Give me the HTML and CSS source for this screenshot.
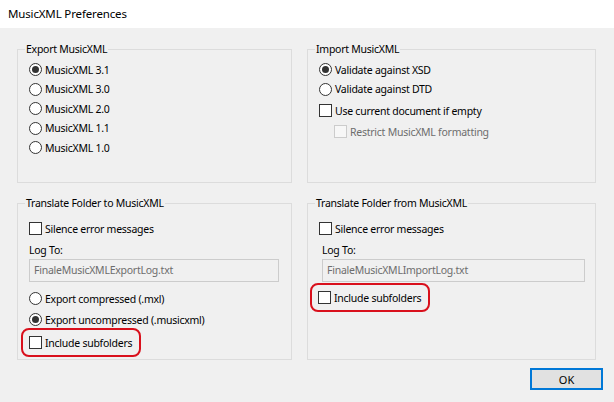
FILE: index.html
```html
<!DOCTYPE html>
<html lang="en">
<head>
    <meta charset="UTF-8">
    <meta name="viewport" content="width=device-width, initial-scale=1.0">
    <title>MusicXML Preferences</title>
    <link rel="stylesheet" href="styles.css">
</head>
<body>
    <div class="titlebar">MusicXML Preferences</div>
    <div class="dialog">
        <div class="groups">
            <fieldset class="group group-top">
                <legend>Export MusicXML</legend>
                <div class="group-body">
                    <label class="row radio-row"><span class="radio checked"></span>MusicXML 3.1</label>
                    <label class="row radio-row"><span class="radio"></span>MusicXML 3.0</label>
                    <label class="row radio-row"><span class="radio"></span>MusicXML 2.0</label>
                    <label class="row radio-row"><span class="radio"></span>MusicXML 1.1</label>
                    <label class="row radio-row"><span class="radio"></span>MusicXML 1.0</label>
                </div>
            </fieldset>
            <fieldset class="group group-top">
                <legend>Import MusicXML</legend>
                <div class="group-body">
                    <label class="row radio-row"><span class="radio checked"></span>Validate against XSD</label>
                    <label class="row radio-row"><span class="radio"></span>Validate against DTD</label>
                    <label class="row check-row first-check"><span class="check"></span>Use current document if empty</label>
                    <label class="row check-row sub disabled"><span class="check"></span>Restrict MusicXML formatting</label>
                </div>
            </fieldset>
            <fieldset class="group group-bottom">
                <legend>Translate Folder to MusicXML</legend>
                <div class="group-body folder-body">
                    <label class="row check-row"><span class="check"></span>Silence error messages</label>
                    <div class="log-label">Log To:</div>
                    <div class="textbox">FinaleMusicXMLExportLog.txt</div>
                    <label class="row radio-row2 after-box"><span class="radio"></span>Export compressed (.mxl)</label>
                    <label class="row radio-row2"><span class="radio checked"></span>Export uncompressed (.musicxml)</label>
                    <label class="row check-row marked marked-left"><span class="check"></span>Include subfolders</label>
                </div>
            </fieldset>
            <fieldset class="group group-bottom">
                <legend>Translate Folder from MusicXML</legend>
                <div class="group-body folder-body">
                    <label class="row check-row"><span class="check"></span>Silence error messages</label>
                    <div class="log-label indent">Log To:</div>
                    <div class="textbox indent wide">FinaleMusicXMLImportLog.txt</div>
                    <label class="row check-row marked marked-right"><span class="check"></span>Include subfolders</label>
                </div>
            </fieldset>
        </div>
        <div class="footer">
            <button class="ok">OK</button>
        </div>
    </div>
</body>
</html>
```

FILE: styles.css
```css
body {
    margin: 0;
    width: 614px;
    height: 402px;
    background-color: #f0f0f0;
    font-family: "Noto Sans", "Open Sans", sans-serif;
    font-size: 10.5px;
    letter-spacing: -0.25px;
    color: #000;
    overflow: hidden;
}
.titlebar {
    height: 28px;
    line-height: 27px;
    padding-left: 8px;
    background-color: #ffffff;
    font-size: 11.5px;
    letter-spacing: -0.15px;
}
.dialog {
    padding-top: 13px;
}
.groups {
    display: grid;
    grid-template-columns: 275px 289px;
    column-gap: 15px;
    row-gap: 12px;
    padding-left: 17px;
}
.group {
    margin: 0;
    padding: 0;
    border: 1px solid #dcdcdc;
    min-width: 0;
}
.group legend {
    margin-left: 7px;
    padding: 0 1px;
    line-height: 16px;
}
.group-top {
    height: 142px;
    box-sizing: border-box;
}
.group-bottom {
    height: 165px;
    box-sizing: border-box;
}
.group-body {
    display: flex;
    flex-direction: column;
    align-items: flex-start;
    padding: 3px 0 0 11px;
}
.folder-body {
    padding-top: 7px;
}
.row {
    display: flex;
    align-items: center;
    gap: 3px;
    white-space: nowrap;
}
.radio-row {
    height: 19.5px;
}
.radio-row2 {
    height: 21px;
}
.check-row {
    height: 21px;
}
.first-check {
    margin-top: 1px;
}
.sub {
    padding-left: 15px;
}
.disabled {
    color: #6d6d6d;
}
.radio {
    width: 11px;
    height: 11px;
    border: 1px solid #333333;
    border-radius: 50%;
    background: #ffffff;
    position: relative;
    flex: none;
}
.radio.checked::after {
    content: "";
    position: absolute;
    left: 2px;
    top: 2px;
    width: 7px;
    height: 7px;
    border-radius: 50%;
    background: #333333;
}
.check {
    width: 11px;
    height: 11px;
    border: 1px solid #333333;
    background: #ffffff;
    flex: none;
}
.disabled .check {
    border-color: #cccccc;
    background: #f7f7f7;
}
.log-label {
    line-height: 16px;
    margin-top: 3px;
}
.textbox {
    box-sizing: border-box;
    width: 250px;
    height: 23px;
    margin-top: 1px;
    padding-left: 4px;
    line-height: 21px;
    border: 1px solid #cccccc;
    background: #f0f0f0;
    color: #6d6d6d;
}
.indent {
    margin-left: 3px;
}
.wide {
    width: 263px;
}
.after-box {
    margin-top: 6px;
}
.marked {
    box-sizing: border-box;
    height: 29px;
    border: 2px solid #d9101c;
    border-radius: 8px;
    padding: 0 7px 0 6px;
}
.marked-left {
    margin-left: -8px;
    margin-top: -2px;
}
.marked-right {
    margin-left: -9px;
    margin-top: 1px;
}
.footer {
    display: flex;
    justify-content: flex-end;
    padding: 8px 11px 0 0;
}
.ok {
    width: 73px;
    height: 22px;
    padding: 0;
    border: 2px solid #0078d7;
    background-color: #e1e1e1;
    font-family: "Noto Sans", "Open Sans", sans-serif;
    font-size: 11px;
    color: #000;
}
```
